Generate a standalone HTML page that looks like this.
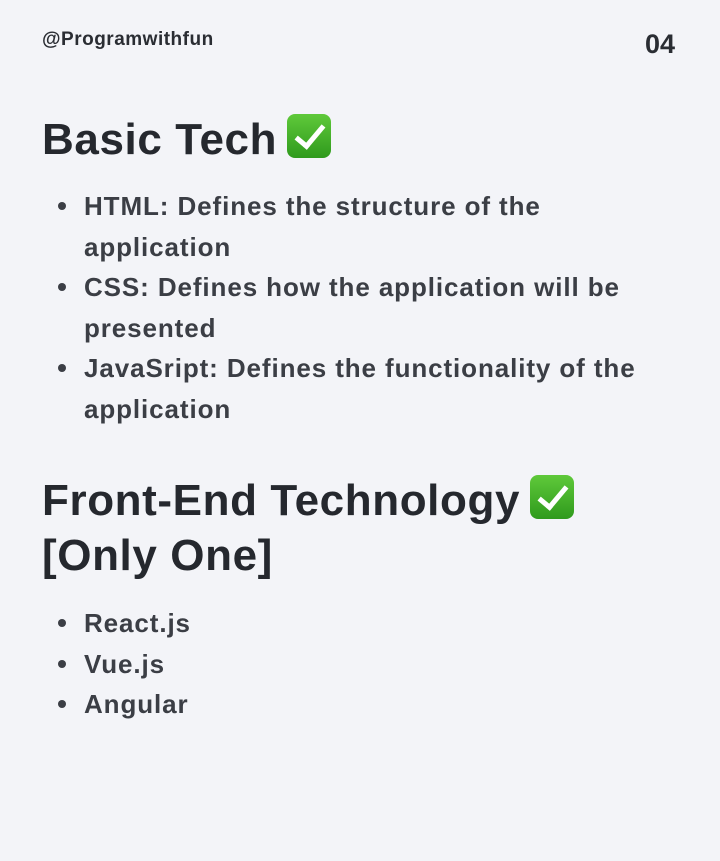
<!DOCTYPE html>
<html><head><meta charset="utf-8"><style>
body{margin:0;width:720px;height:861px;background:#f3f4f8;font-family:"Liberation Sans",sans-serif;position:relative;overflow:hidden}
.a{position:absolute;white-space:nowrap}
.h{font-weight:bold;color:#25282e;font-size:44px;letter-spacing:0.6px}
.b{font-weight:bold;color:#3b3e45;font-size:26px;line-height:40.5px;letter-spacing:0.9px}
.chk{display:inline-block;width:44px;height:44px;background:linear-gradient(#5fc93a,#2f9a1d);border-radius:8px;vertical-align:-4px;position:relative;margin-left:10px}
.chk:after{content:"";position:absolute;left:15px;top:5px;width:11px;height:24px;border:solid #fff;border-width:0 5px 5px 0;transform:rotate(40deg)}
.dot{display:inline-block;width:8px;height:8px;border-radius:50%;background:#3b3e45;position:absolute;left:-26px;top:16px}
</style></head><body>
<div class="a" style="left:42px;top:29px;font-size:19px;letter-spacing:0.5px;font-weight:bold;color:#2a2d33">@Programwithfun</div>
<div class="a" style="left:645px;top:29px;font-size:27px;font-weight:bold;color:#2a2d33">04</div>
<div class="a h" style="left:42px;top:114px">Basic Tech<span class="chk"></span></div>
<div class="a b" style="left:84px;top:186px">
<div style="position:relative"><span class="dot"></span>HTML: Defines the structure of the</div>
<div>application</div>
<div style="position:relative"><span class="dot"></span>CSS: Defines how the application will be</div>
<div>presented</div>
<div style="position:relative"><span class="dot"></span>JavaSript: Defines the functionality of the</div>
<div>application</div>
</div>
<div class="a h" style="left:42px;top:473px;line-height:55px">Front-End Technology<span class="chk"></span><br>[Only One]</div>
<div class="a b" style="left:84px;top:603px">
<div style="position:relative"><span class="dot"></span>React.js</div>
<div style="position:relative"><span class="dot"></span>Vue.js</div>
<div style="position:relative"><span class="dot"></span>Angular</div>
</div>
</body></html>
